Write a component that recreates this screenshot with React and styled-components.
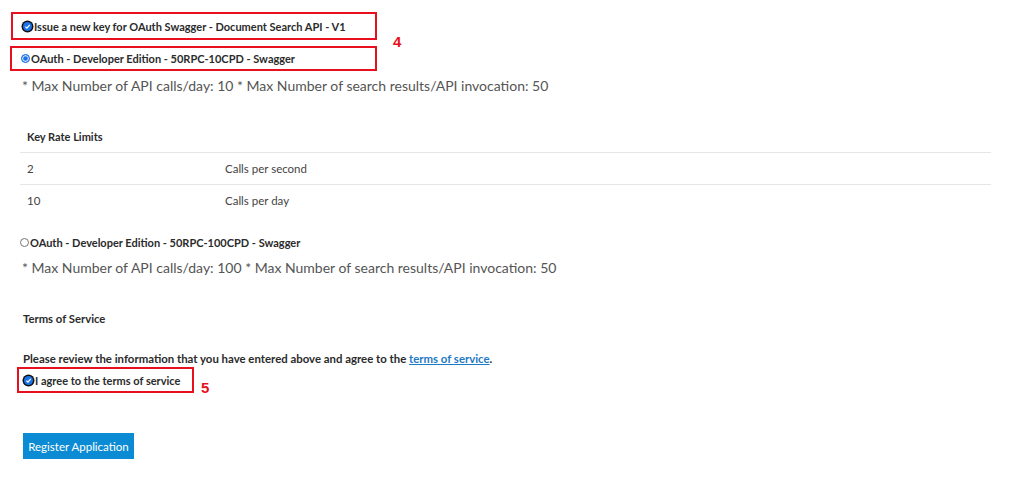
import React from 'react';
import styled, { createGlobalStyle } from 'styled-components';

const Global = createGlobalStyle`
  html, body { margin: 0; padding: 0; background: #fff; }
  body { font-family: Lato, "Open Sans", sans-serif; color: #333; }
`;

const Page = styled.div`
  width: 1024px;
  height: 482px;
  padding: 12px 0 0 0;
  box-sizing: border-box;
  overflow: hidden;
`;

const KeyGroup = styled.div`
  display: grid;
  grid-template-columns: auto auto;
  align-items: center;
  justify-content: start;
  column-gap: 16px;
`;

const Stack = styled.div`
  display: flex;
  flex-direction: column;
  gap: 6px;
`;

const Marked = styled.div`
  border: 2px solid #e8101e;
  display: flex;
  align-items: center;
  box-sizing: border-box;
  height: ${p => p.$h}px;
  width: ${p => p.$w}px;
  margin-left: ${p => p.$left}px;
  padding-left: ${p => p.$pad}px;
`;

const Step = styled.span`
  color: #e8101e;
  font-family: "Liberation Sans", Arial, sans-serif;
  font-weight: 700;
  font-size: 15px;
  margin-top: ${p => p.$top || 0}px;
`;

const Choice = styled.label`
  display: flex;
  align-items: center;
  white-space: nowrap;
  font-weight: 700;
  font-size: 11px;
  color: #2b2b2b;
  margin-left: ${p => p.$left || 0}px;
  margin-top: ${p => p.$top || 0}px;
`;

const Radio = styled.span`
  width: 9px;
  height: 9px;
  border-radius: 50%;
  box-sizing: border-box;
  border: 1px solid ${p => (p.$on ? '#1a73e8' : '#767676')};
  background: ${p => (p.$on ? '#1a73e8' : '#fff')};
  box-shadow: ${p => (p.$on ? 'inset 0 0 0 1.2px #cfe3fb' : 'none')};
  margin-right: 1px;
  flex: none;
`;

const Check = styled.span`
  width: 9px;
  height: 9px;
  border-radius: 50%;
  background: #1a73e8;
  box-shadow: 0 0 0 1.5px #111;
  display: flex;
  align-items: center;
  justify-content: center;
  margin-right: 2px;
  flex: none;
`;

const Limits = styled.p`
  margin: ${p => p.$top}px 0 0 0;
  font-size: 14px;
  color: #555;
  padding-left: 22px;
`;

const Table = styled.table`
  margin: 26px 0 0 20px;
  width: 971px;
  border-collapse: collapse;
  font-size: 11.5px;
  color: #444;
  th {
    text-align: left;
    font-weight: 700;
    font-size: 11px;
    color: #2b2b2b;
    height: 32px;
    padding: 0 7px;
    border-bottom: 1.5px solid #e6e6e6;
  }
  td {
    height: 31px;
    padding: 0 7px;
  }
  tr + tr td {
    border-top: 1.5px solid #e6e6e6;
  }
  td:first-child {
    width: 184px;
  }
`;

const SectionTitle = styled.h3`
  margin: 36px 0 0 23px;
  font-size: 11.3px;
  font-weight: 700;
  color: #2b2b2b;
`;

const Notice = styled.p`
  margin: 27px 0 0 23px;
  font-size: 11.4px;
  font-weight: 700;
  color: #2b2b2b;
  a {
    color: #1f7ac4;
    text-decoration: underline;
  }
`;

const AgreeRow = styled.div`
  display: flex;
  align-items: flex-start;
  gap: 7px;
  margin-top: 2px;
`;

const Button = styled.button`
  margin: 37px 0 0 23px;
  width: 111px;
  height: 26px;
  border: none;
  background: #0b8bd3;
  color: #fff;
  font-family: inherit;
  font-size: 11.5px;
  padding: 0;
`;

const Tick = () => (
  <svg width="7" height="7" viewBox="0 0 10 10">
    <path d="M2 5.2 L4.2 7.4 L8.2 2.8" fill="none" stroke="#fff" strokeWidth="1.8" />
  </svg>
);

export default function App() {
  return (
    <Page>
      <Global />
      <KeyGroup>
        <Stack>
          <Marked $h={28} $w={366} $left={11} $pad={10}>
            <Choice><Check><Tick /></Check>Issue a new key for OAuth Swagger - Document Search API - V1</Choice>
          </Marked>
          <Marked $h={25} $w={367} $left={10} $pad={9}>
            <Choice><Radio $on />OAuth - Developer Edition - 50RPC-10CPD - Swagger</Choice>
          </Marked>
        </Stack>
        <Step>4</Step>
      </KeyGroup>
      <Limits $top={6}>* Max Number of API calls/day: 10 * Max Number of search results/API invocation: 50</Limits>

      <Table>
        <thead>
          <tr><th colSpan={2}>Key Rate Limits</th></tr>
        </thead>
        <tbody>
          <tr><td>2</td><td>Calls per second</td></tr>
          <tr><td>10</td><td>Calls per day</td></tr>
        </tbody>
      </Table>

      <Choice $left={20} $top={20}>
        <Radio />OAuth - Developer Edition - 50RPC-100CPD - Swagger
      </Choice>
      <Limits $top={10}>* Max Number of API calls/day: 100 * Max Number of search results/API invocation: 50</Limits>

      <SectionTitle>Terms of Service</SectionTitle>
      <Notice>
        Please review the information that you have entered above and agree to the <a href="#tos">terms of service</a>.
      </Notice>
      <AgreeRow>
        <Marked $h={26} $w={177} $left={17} $pad={5}>
          <Choice><Check><Tick /></Check>I agree to the terms of service</Choice>
        </Marked>
        <Step $top={12}>5</Step>
      </AgreeRow>
      <Button>Register Application</Button>
    </Page>
  );
}
